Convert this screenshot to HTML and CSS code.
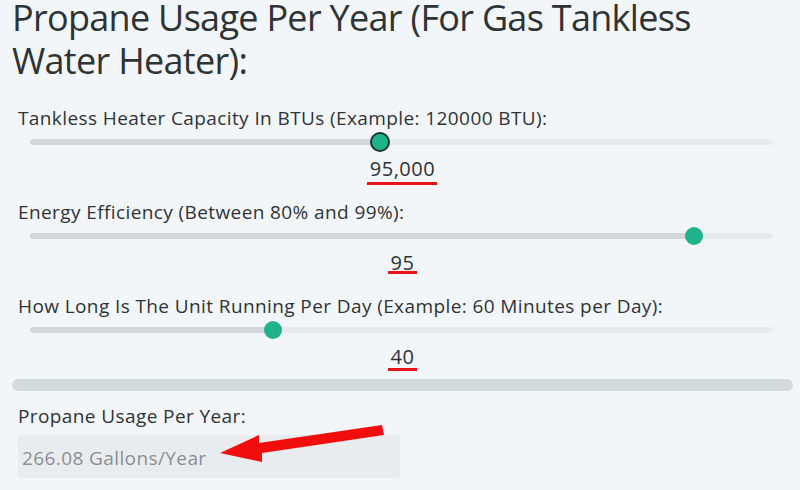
FILE: index.html
```html
<!DOCTYPE html>
<html>
<head>
<meta charset="utf-8">
<link rel="stylesheet" href="styles.css">
</head>
<body>
<div class="page">
  <h1 class="title">Propane Usage Per Year (For Gas Tankless Water Heater):</h1>

  <div class="field">
    <div class="label">Tankless Heater Capacity In BTUs (Example: 120000 BTU):</div>
    <div class="slider">
      <div class="track"><div class="fill" style="width:47.1%"></div></div>
      <div class="thumb focused" style="left:47.1%"></div>
    </div>
    <div class="value"><span class="mark mark-a">95,000</span></div>
  </div>

  <div class="field">
    <div class="label">Energy Efficiency (Between 80% and 99%):</div>
    <div class="slider">
      <div class="track"><div class="fill" style="width:89.4%"></div></div>
      <div class="thumb" style="left:89.4%"></div>
    </div>
    <div class="value"><span class="mark mark-b">95</span></div>
  </div>

  <div class="field last">
    <div class="label">How Long Is The Unit Running Per Day (Example: 60 Minutes per Day):</div>
    <div class="slider">
      <div class="track"><div class="fill" style="width:32.7%"></div></div>
      <div class="thumb" style="left:32.7%"></div>
    </div>
    <div class="value"><span class="mark mark-c">40</span></div>
  </div>

  <div class="divider"></div>

  <div class="result">
    <div class="label">Propane Usage Per Year:</div>
    <div class="output">266.08 Gallons/Year</div>
    <svg class="arrow" width="800" height="490" viewBox="0 0 800 490">
      <polygon points="220,457 259,439 259,447 382,429 384,439 262,457 262,466" fill="#f20d0d"/>
    </svg>
  </div>
</div>
</body>
</html>
```

FILE: styles.css
```css
html, body {
  margin: 0;
  padding: 0;
  background: #f3f6f9;
}
body {
  width: 800px;
  height: 490px;
  overflow: hidden;
  font-family: "Open Sans", "Noto Sans", sans-serif;
  color: #2e3336;
}
.page {
  padding: 0 7px 0 12px;
  position: relative;
}
.title {
  margin: -4px 0 0 0;
  font-size: 36px;
  line-height: 43px;
  font-weight: 400;
  color: #2e3336;
  letter-spacing: -0.7px;
}
.field {
  padding-bottom: 19px;
}
.title + .field {
  margin-top: 24px;
}
.field.last {
  padding-bottom: 0;
}
.label {
  padding-left: 6px;
  font-size: 19px;
  letter-spacing: 0.4px;
  line-height: 24px;
  color: #2e3336;
}
.slider {
  position: relative;
  height: 24px;
  margin: 0 20px 0 18px;
  display: flex;
  align-items: center;
}
.track {
  width: 100%;
  height: 6px;
  border-radius: 3px;
  background: #e7eaed;
  overflow: hidden;
}
.fill {
  height: 100%;
  background: #d3d7da;
}
.thumb {
  position: absolute;
  top: 50%;
  width: 18px;
  height: 18px;
  margin: -9px 0 0 -9px;
  border-radius: 50%;
  background: #20b38b;
  box-sizing: border-box;
}
.thumb.focused {
  width: 20px;
  height: 20px;
  margin: -10px 0 0 -10px;
  border: 2px solid #17382e;
}
.value {
  margin-top: 3px;
  text-align: center;
  font-size: 20px;
  letter-spacing: 0.5px;
  line-height: 24px;
  color: #2e3336;
}
.mark {
  position: relative;
  display: inline-block;
}
.mark::after {
  content: "";
  position: absolute;
  left: -3px;
  right: -3px;
  height: 3px;
  background: #e8141b;
}
.mark-a::after { bottom: -4px; left: -3px; right: -2px; }
.mark-b::after { bottom: 1px; }
.mark-c::after { bottom: -2px; }
.divider {
  margin-top: 10px;
  height: 12px;
  border-radius: 6px;
  background: #d5dadc;
}
.result {
  margin-top: 13px;
}
.output {
  margin: 7px 0 0 6px;
  width: 382px;
  height: 43px;
  box-sizing: border-box;
  padding: 11px 0 0 4px;
  background: #e9ecef;
  border-radius: 3px;
  font-size: 19px;
  letter-spacing: 0.4px;
  line-height: 24px;
  color: #8a8f93;
}
.arrow {
  position: absolute;
  left: 0;
  top: 0;
  pointer-events: none;
}
```
